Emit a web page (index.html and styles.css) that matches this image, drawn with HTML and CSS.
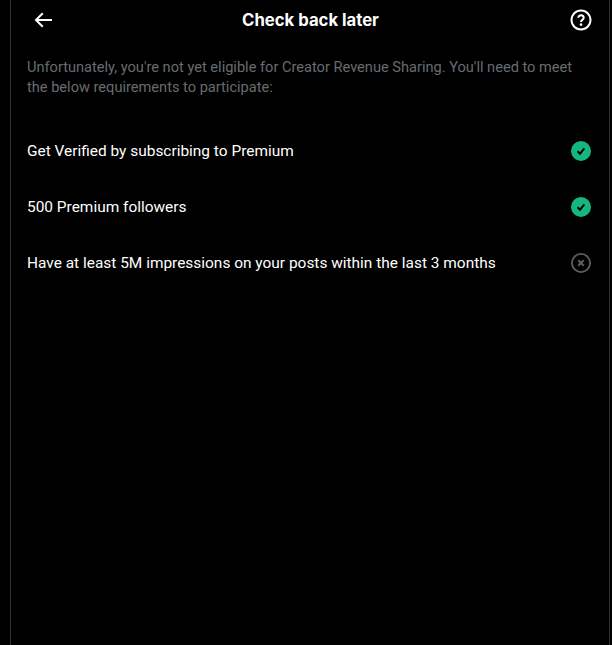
FILE: index.html
```html
<!DOCTYPE html>
<html>
  <head>
    <meta charset="UTF-8" />
    <title>Check back later</title>
    <link rel="stylesheet" href="styles.css">
  </head>
  <body>
    <div id="panel">
      <!-- header -->
      <div class="top-bar">
        <button class="icon-btn">
          <svg viewBox="0 0 24 24" width="24" height="24"><path fill="#fff" d="M7.414 13l5.043 5.04-1.414 1.42L3.586 12l7.457-7.46 1.414 1.42L7.414 11H21v2H7.414z"/></svg>
        </button>
        <h1 class="title">Check back later</h1>
        <button class="icon-btn">
          <svg viewBox="0 0 24 24" width="24" height="24"><path fill="#fff" d="M12 3.500a8.500 8.500 0 1 0 0 17 8.500 8.500 0 0 0 0-17zM1.500 12C1.500 6.200 6.200 1.500 12 1.500S22.500 6.200 22.500 12 17.800 22.500 12 22.500 1.500 17.800 1.500 12z"/><path fill="none" stroke="#fff" stroke-width="2" d="M9.300 9.800c0-1.600 1.200-2.600 2.700-2.600s2.700 1 2.700 2.500c0 2.300-2.700 2.100-2.700 4.300"/><circle fill="#fff" cx="12" cy="16.600" r="1.300"/></svg>
        </button>
      </div>

      <p class="intro">Unfortunately, you're not yet eligible for Creator Revenue Sharing. You'll need to meet the below requirements to participate:</p>

      <!-- requirements -->
      <div class="req-list">
        <div class="req">
          <span>Get Verified by subscribing to Premium</span>
          <svg class="status" viewBox="0 0 22 22"><circle cx="11" cy="11" r="11" fill="#14b87f"/><path fill="none" stroke="#000" stroke-width="2.200" d="M7.200 11.300l2.700 2.700 4.800-6"/></svg>
        </div>
        <div class="req">
          <span>500 Premium followers</span>
          <svg class="status" viewBox="0 0 22 22"><circle cx="11" cy="11" r="11" fill="#14b87f"/><path fill="none" stroke="#000" stroke-width="2.200" d="M7.200 11.300l2.700 2.700 4.800-6"/></svg>
        </div>
        <div class="req">
          <span>Have at least 5M impressions on your posts within the last 3 months</span>
          <svg class="status" viewBox="0 0 22 22"><circle cx="11" cy="11" r="10" fill="none" stroke="#5b5f63" stroke-width="2"/><path fill="none" stroke="#5b5f63" stroke-width="2.200" d="M8 8l6 6M14 8l-6 6"/></svg>
        </div>
      </div>
    </div>
  </body>
</html>
```

FILE: styles.css
```css
body {
  margin: 0;
  padding: 0;
  background: #000;
  overflow: hidden;
  font-family: "Roboto", "Inter", sans-serif;
}

#panel {
  width: 600px;
  height: 645px;
  margin-left: 10px;
  border-left: 1px solid #2f3336;
  border-right: 1px solid #2f3336;
  box-sizing: border-box;
}

.top-bar {
  display: flex;
  align-items: center;
  justify-content: space-between;
  height: 40px;
  padding: 0 12px 0 16px;
}

.icon-btn {
  display: flex;
  align-items: center;
  justify-content: center;
  width: 32px;
  height: 32px;
  padding: 0;
  background: none;
  border: none;
}

.title {
  margin: 0 3px 0 0;
  color: #fff;
  font-family: "Inter", sans-serif;
  font-size: 16.7px;
  font-weight: 700;
  line-height: 20px;
}

.intro {
  margin: 17px 0 0;
  padding: 0 16px;
  color: #676c70;
  font-size: 14.6px;
  line-height: 20px;
}

.req-list {
  margin-top: 26px;
  padding: 0 18px 0 16px;
}

.req {
  display: flex;
  align-items: center;
  justify-content: space-between;
  height: 56px;
  color: #fff;
  font-size: 15.45px;
  line-height: 20px;
}

.status {
  width: 20px;
  height: 20px;
}
```
